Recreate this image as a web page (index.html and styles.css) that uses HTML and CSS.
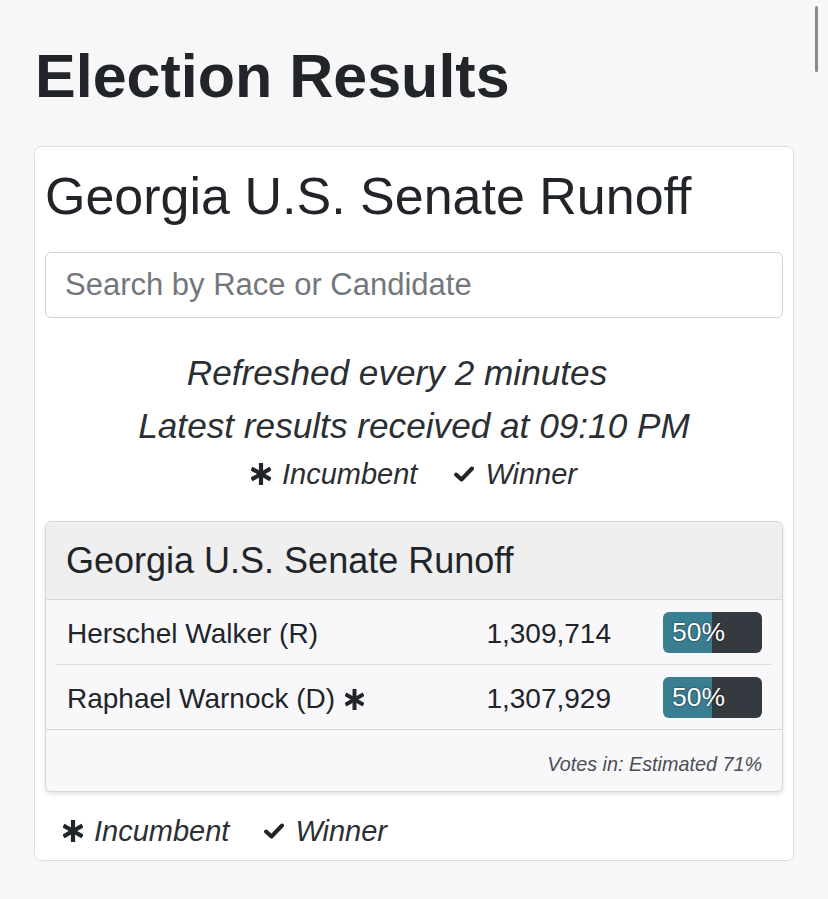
FILE: index.html
```html
<!DOCTYPE html>
<html>
<head>
<meta charset="utf-8">
<link rel="stylesheet" href="styles.css">
</head>
<body>
<div class="scrollbar"></div>
<h1 class="page-title">Election Results</h1>
<div class="card">
  <h2 class="card-title">Georgia U.S. Senate Runoff</h2>
  <input class="search" type="text" placeholder="Search by Race or Candidate">
  <p class="info first">Refreshed every 2 minutes</p>
  <p class="info">Latest results received at 09:10 PM</p>
  <div class="legend center">
    <span class="leg-item"><svg class="ico-ast" viewBox="0 0 20 22"><g stroke="#212529" stroke-width="4.2"><line x1="10" y1="0" x2="10" y2="22"/><line x1="0.5" y1="5.5" x2="19.5" y2="16.5"/><line x1="0.5" y1="16.5" x2="19.5" y2="5.5"/></g></svg><span>Incumbent</span></span>
    <span class="leg-item"><svg class="ico-chk" viewBox="0 0 20 16"><path d="M2 8.5 L7.5 13.5 L18 2.5" fill="none" stroke="#212529" stroke-width="4" stroke-linejoin="round" stroke-linecap="round"/></svg><span>Winner</span></span>
  </div>
  <div class="race">
    <div class="race-head">Georgia U.S. Senate Runoff</div>
    <div class="race-body">
      <div class="row">
        <span class="name">Herschel Walker (R)</span>
        <span class="votes">1,309,714</span>
        <span class="bar" style="--pct:50%"><span class="bar-text">50%</span></span>
      </div>
      <div class="row">
        <span class="name">Raphael Warnock (D) <svg class="ico-ast small" viewBox="0 0 20 22"><g stroke="#212529" stroke-width="4.2"><line x1="10" y1="0" x2="10" y2="22"/><line x1="0.5" y1="5.5" x2="19.5" y2="16.5"/><line x1="0.5" y1="16.5" x2="19.5" y2="5.5"/></g></svg></span>
        <span class="votes">1,307,929</span>
        <span class="bar" style="--pct:50%"><span class="bar-text">50%</span></span>
      </div>
    </div>
    <div class="race-foot">Votes in: Estimated 71%</div>
  </div>
  <div class="legend left">
    <span class="leg-item"><svg class="ico-ast" viewBox="0 0 20 22"><g stroke="#212529" stroke-width="4.2"><line x1="10" y1="0" x2="10" y2="22"/><line x1="0.5" y1="5.5" x2="19.5" y2="16.5"/><line x1="0.5" y1="16.5" x2="19.5" y2="5.5"/></g></svg><span>Incumbent</span></span>
    <span class="leg-item"><svg class="ico-chk" viewBox="0 0 20 16"><path d="M2 8.5 L7.5 13.5 L18 2.5" fill="none" stroke="#212529" stroke-width="4" stroke-linejoin="round" stroke-linecap="round"/></svg><span>Winner</span></span>
  </div>
</div>
</body>
</html>
```
FILE: styles.css
```css
html, body {
  margin: 0;
  padding: 0;
  background: #f7f7f7;
  font-family: "Liberation Sans", Arial, Helvetica, sans-serif;
  color: #212529;
}
.scrollbar {
  position: fixed;
  right: 10px;
  top: 6px;
  width: 3px;
  height: 66px;
  border-radius: 2px;
  background: #8a8a8a;
}
.page-title {
  margin: 40px 0 34px 35px;
  font-size: 61px;
  line-height: 72px;
  font-weight: 700;
}
.card {
  margin-left: 34px;
  width: 760px;
  box-sizing: border-box;
  background: #fff;
  border: 1px solid #dedede;
  border-radius: 7px;
  padding: 19px 10px 9px 10px;
}
.card-title {
  margin: 0 0 25px 0;
  font-size: 52px;
  line-height: 61px;
  font-weight: 400;
}
.search {
  display: block;
  width: 100%;
  box-sizing: border-box;
  height: 66px;
  border: 1px solid #cfd3d8;
  border-radius: 6px;
  padding: 0 19px;
  font-family: inherit;
  font-size: 31px;
  color: #495057;
  background: #fff;
  outline: none;
}
.search::placeholder {
  color: #72777d;
}
.info {
  margin: 0;
  text-align: center;
  font-style: italic;
  font-size: 35.2px;
  line-height: 53px;
  color: #2b2f33;
}
.info.first {
  margin-top: 28px;
  padding-right: 34px;
}
.legend {
  display: flex;
  align-items: center;
  gap: 37px;
  font-style: italic;
  font-size: 29px;
  line-height: 40px;
  color: #2b2f33;
}
.legend.center {
  justify-content: center;
  margin-top: 2px;
  margin-bottom: 27px;
}
.legend.left {
  margin-top: 19px;
  padding-left: 18px;
  gap: 35px;
}
.leg-item {
  display: inline-flex;
  align-items: center;
  gap: 11px;
}
.ico-ast {
  width: 20px;
  height: 22px;
  display: inline-block;
}
.ico-ast.small {
  width: 19px;
  height: 21px;
  vertical-align: -2px;
  margin-left: 2px;
}
.ico-chk {
  width: 20px;
  height: 16px;
  display: inline-block;
}
.race {
  border: 1px solid #d8d8d8;
  border-radius: 6px;
  overflow: hidden;
  box-shadow: 0 2px 4px rgba(0, 0, 0, 0.12);
  background: #f8f8fa;
}
.race-head {
  background: #efefef;
  border-bottom: 1px solid #d8d8d8;
  padding: 17px 20px 16px 20px;
  font-size: 36px;
  line-height: 44px;
}
.race-body {
  padding: 0 10px;
}
.row {
  display: flex;
  align-items: center;
  height: 64px;
  padding: 0 10px 0 11px;
  font-size: 28px;
}
.row + .row {
  border-top: 1px solid #dcdcdc;
}
.name {
  flex: 1;
  padding-top: 4px;
}
.votes {
  padding-top: 4px;
  text-align: right;
  margin-right: 52px;
}
.bar {
  width: 99px;
  height: 41px;
  border-radius: 6px;
  background: linear-gradient(to right, #3a7e92 0, #3a7e92 var(--pct), #343a40 var(--pct), #343a40 100%);
  display: flex;
  align-items: center;
}
.bar-text {
  color: #fff;
  font-size: 26.5px;
  padding-left: 9px;
  padding-top: 1px;
  text-shadow: 0 0 2px rgba(0, 0, 0, 0.8);
}
.race-foot {
  border-top: 1px solid #d8d8d8;
  padding: 22px 20px 15px 20px;
  text-align: right;
  font-style: italic;
  font-size: 19.8px;
  line-height: 24px;
  color: #4a4f55;
}
```
